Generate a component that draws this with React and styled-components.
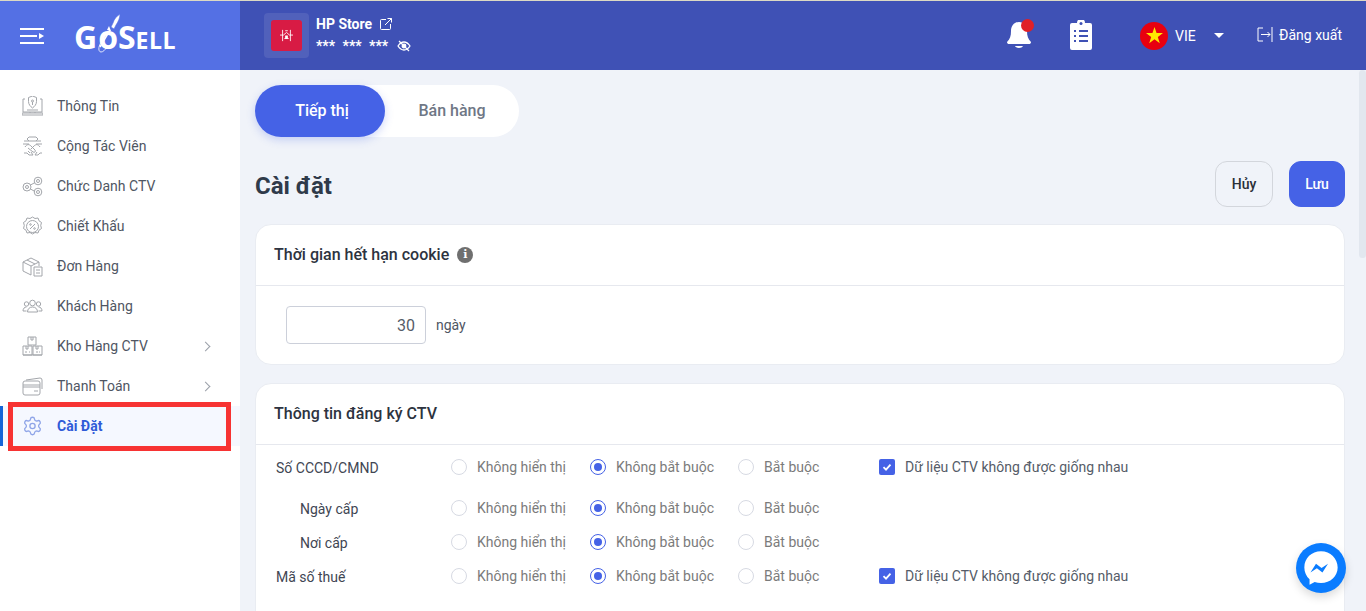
import React from "react"
import styled, { createGlobalStyle } from "styled-components"
import { Settings } from "lucide-react"

const GlobalStyle = createGlobalStyle`
  html, body { margin: 0; padding: 0; height: 100%; overflow: hidden; }
  body { font-family: Roboto, "Liberation Sans", sans-serif; color: #3b4453; }
  * { box-sizing: border-box; }
`

const Page = styled.div`
  width: 1366px;
  height: 611px;
  overflow: hidden;
  background: #f0f3f9;
  border-top: 1px solid #dcd9c4;
`
const Header = styled.header`
  height: 69px;
  display: flex;
  background: #3f51b5;
  color: #fff;
`
const Brand = styled.div`
  width: 240px;
  background: #5470e4;
  display: flex;
  align-items: center;
  padding-left: 20px;
  gap: 29px;
`
const LogoWrap = styled.div`
  position: relative;
  display: flex;
  align-items: baseline;
  color: #fff;
  font-family: "Open Sans", sans-serif;
  font-weight: 700;
  line-height: 1;
  margin-top: 2px;
`
const LogoBig = styled.span`
  font-size: 32px;
  letter-spacing: ${p => p.$gap || 0}px;
`
const LogoSmall = styled.span`
  font-size: 23px;
  letter-spacing: 0.5px;
`
const Rocket = styled.svg`
  position: absolute;
  left: 20px;
  top: -8px;
`
const HeaderMain = styled.div`
  flex: 1;
  display: flex;
  align-items: center;
  padding-left: 24px;
  padding-right: 24px;
`
const StoreThumb = styled.div`
  width: 45px;
  height: 45px;
  border-radius: 4px;
  background: #5161bb;
  display: flex;
  align-items: center;
  justify-content: center;
  margin-right: 7px;
`
const StoreLogo = styled.div`
  width: 31px;
  height: 31px;
  border-radius: 3px;
  background: #d81b44;
  display: flex;
  align-items: center;
  justify-content: center;
`
const StoreInfo = styled.div`
  display: flex;
  flex-direction: column;
  gap: 6px;
  margin-top: -3px;
`
const StoreName = styled.div`
  display: flex;
  align-items: center;
  gap: 8px;
  font-size: 14px;
  font-weight: 700;
  line-height: 18px;
`
const StoreMask = styled.div`
  display: flex;
  align-items: center;
  font-size: 14px;
  font-weight: 700;
  line-height: 14px;
  height: 14px;
  word-spacing: 4px;
  gap: 9px;
`
const HeaderRight = styled.div`
  margin-left: auto;
  display: flex;
  align-items: center;
`
const Bell = styled.div`
  position: relative;
  width: 26px;
  height: 30px;
  margin-top: -2px;
  margin-right: 38px;
`
const BellDot = styled.span`
  position: absolute;
  top: -1px;
  right: -2px;
  width: 13px;
  height: 13px;
  border-radius: 50%;
  background: #e02027;
`
const Clipboard = styled.svg`
  margin-top: -2px;
`
const Flag = styled.div`
  width: 28px;
  height: 28px;
  border-radius: 50%;
  background: #e8000f;
  display: flex;
  align-items: center;
  justify-content: center;
  margin-left: 48px;
  margin-right: 7px;
`
const Lang = styled.span`
  font-size: 14px;
  width: 39px;
`
const Caret = styled.span`
  width: 0;
  height: 0;
  border-left: 5px solid transparent;
  border-right: 5px solid transparent;
  border-top: 5px solid #fff;
  margin-right: 33px;
`
const Logout = styled.div`
  display: flex;
  align-items: center;
  gap: 6px;
  font-size: 14px;
  margin-top: -2px;
`

const Body = styled.div`
  display: flex;
  height: 541px;
`
const Sidebar = styled.nav`
  width: 240px;
  flex: none;
  background: #fff;
  padding-top: 16px;
`
const NavRow = styled.div`
  position: relative;
  height: 40px;
  display: flex;
  align-items: center;
  padding-left: 22px;
  padding-right: 31px;
  font-size: 14px;
  color: ${p => (p.$active ? "#2f5bd8" : "#4f5663")};
  font-weight: ${p => (p.$active ? 700 : 400)};
  background: ${p => (p.$active ? "#f5f8ff" : "transparent")};
`
const NavIcon = styled.span`
  width: 21px;
  height: 21px;
  margin-right: 14px;
  display: flex;
  align-items: center;
  justify-content: center;
`
const NavArrow = styled.span`
  margin-left: auto;
  width: 7px;
  height: 7px;
  border-top: 1.5px solid #9a9fa8;
  border-right: 1.5px solid #9a9fa8;
  transform: rotate(45deg);
`
const ActiveBar = styled.span`
  position: absolute;
  left: 0;
  top: 0;
  width: 3px;
  height: 40px;
  background: #1565d8;
`
const Highlight = styled.span`
  position: absolute;
  left: 8px;
  top: -4px;
  width: 223px;
  height: 49px;
  border: 5px solid #f73333;
  pointer-events: none;
`

const Main = styled.main`
  flex: 1;
  display: flex;
  min-width: 0;
`
const Content = styled.div`
  flex: 1;
  padding: 15px 14px 0 15px;
  min-width: 0;
`
const Scrollbar = styled.div`
  width: 7px;
  flex: none;
`
const ScrollThumb = styled.div`
  height: 188px;
  border-radius: 4px;
  background: #e2e7ef;
`
const Tabs = styled.div`
  display: inline-flex;
  height: 52px;
  background: #fff;
  border-radius: 26px;
`
const Tab = styled.div`
  width: ${p => (p.$active ? 130 : 134)}px;
  display: flex;
  align-items: center;
  justify-content: center;
  padding-left: ${p => (p.$active ? 4 : 0)}px;
  padding-bottom: 2px;
  border-radius: 26px;
  font-size: 16px;
  font-weight: 500;
  color: ${p => (p.$active ? "#fff" : "#6f7785")};
  background: ${p => (p.$active ? "#4562e6" : "transparent")};
  box-shadow: ${p => (p.$active ? "0 3px 8px rgba(69,98,230,.25)" : "none")};
`
const TitleRow = styled.div`
  display: flex;
  align-items: center;
  justify-content: space-between;
  margin-top: 24px;
  height: 46px;
  margin-bottom: 17px;
`
const Title = styled.h1`
  margin: 4px 0 0;
  font-size: 24px;
  font-weight: 700;
  color: #2f3a4a;
`
const Actions = styled.div`
  display: flex;
  gap: 16px;
`
const Button = styled.button`
  height: 46px;
  width: ${p => (p.$primary ? 56 : 58)}px;
  border-radius: 12px;
  font-family: Roboto, sans-serif;
  font-size: 14px;
  font-weight: 500;
  color: ${p => (p.$primary ? "#fff" : "#2a2f38")};
  background: ${p => (p.$primary ? "#4562e6" : "#f0f3f9")};
  border: 1px solid ${p => (p.$primary ? "#4562e6" : "#d3d6dc")};
  padding: 0;
`
const Card = styled.section`
  background: #fff;
  border: 1px solid #e9ecf2;
  border-radius: 16px;
  margin-bottom: 18px;
`
const CardHead = styled.div`
  height: 61px;
  display: flex;
  align-items: center;
  gap: 8px;
  padding: 0 0 1px 18px;
  border-bottom: 1px solid #e6e8ee;
  font-size: 16px;
  font-weight: 500;
  color: #2d3340;
`
const InfoDot = styled.span`
  width: 16px;
  height: 16px;
  border-radius: 50%;
  background: #6f6f6f;
  color: #fff;
  font-family: "DejaVu Serif", serif;
  font-size: 11px;
  font-weight: 700;
  display: flex;
  align-items: center;
  justify-content: center;
`
const CookieBody = styled.div`
  height: 78px;
  display: flex;
  align-items: center;
  padding-left: 30px;
  gap: 10px;
  font-size: 14px;
  color: #4f5663;
`
const NumberBox = styled.div`
  width: 140px;
  height: 38px;
  border: 1px solid #ccd0da;
  border-radius: 4px;
  display: flex;
  align-items: center;
  justify-content: flex-end;
  padding-right: 10px;
  font-size: 16px;
  color: #555c68;
`
const FieldList = styled.div`
  padding: 5px 0 60px;
`
const FieldRow = styled.div`
  display: flex;
  align-items: center;
  height: ${p => p.$h || 34}px;
  margin-bottom: ${p => p.$mb || 0}px;
  font-size: 14px;
`
const FieldLabel = styled.div`
  width: 195px;
  padding-left: ${p => (p.$sub ? 44 : 20)}px;
  color: #3f4653;
  padding-top: 2px;
`
const RadioItem = styled.div`
  display: flex;
  align-items: center;
  gap: 10px;
  width: ${p => p.$w}px;
  color: #7b7b7b;
`
const Radio = styled.span`
  width: 16px;
  height: 16px;
  border-radius: 50%;
  flex: none;
  background: #fff;
  border: ${p => (p.$on ? "1.5px solid #4562e6" : "1px solid #d7dae3")};
  display: flex;
  align-items: center;
  justify-content: center;
  &::after {
    content: "";
    display: ${p => (p.$on ? "block" : "none")};
    width: 8px;
    height: 8px;
    border-radius: 50%;
    background: #4562e6;
  }
`
const UniqueCheck = styled.div`
  display: flex;
  align-items: center;
  gap: 10px;
  color: #555c68;
`
const CheckBox = styled.span`
  width: 16px;
  height: 16px;
  border-radius: 2px;
  background: #4562e6;
  display: flex;
  align-items: center;
  justify-content: center;
`
const Messenger = styled.div`
  position: absolute;
  left: 1296px;
  top: 543px;
  width: 50px;
  height: 50px;
  border-radius: 50%;
  background: #0a7cff;
  box-shadow: 0 4px 10px rgba(0,0,0,.15);
  display: flex;
  align-items: center;
  justify-content: center;
`

const Ic = ({ children }) => (
  <svg width="21" height="21" viewBox="0 0 21 21" fill="none" stroke="#a3a6ab" strokeWidth="1">
    {children}
  </svg>
)

const icons = {
  info: (
    <Ic>
      <path d="M3 3H1v13h19V3h-2" />
      <path d="M0 17h21v2H0zM8 16v1M13 16v1M5 14h11" />
      <path d="M10.500 0l4 1.500v4c0 3-2 5-4 6.500-2-1.500-4-3.500-4-6.500v-4z" />
      <circle cx="10.500" cy="5" r="1" />
      <path d="M10.500 6v3" />
    </Ic>
  ),
  people: (
    <Ic>
      <path d="M7 1h7l2 2-2 2H7L5 3zM2 5h5M14 5h5M1 8h6M14 8h6" />
      <path d="M3 11c2-3 4-3 6-1l4 4c1 1 0 3-2 2l-5-4M18 11c-2-3-4-3-6-1l-3 3" />
      <path d="M6 15l2 2M9 16l2 3h-4l-2-2H2M15 16l-2 3h3l2-2h2" />
    </Ic>
  ),
  share: (
    <Ic>
      <circle cx="5" cy="11" r="4" />
      <circle cx="5" cy="11" r="1.500" />
      <circle cx="16" cy="5" r="3.800" />
      <circle cx="16" cy="5" r="1.500" />
      <circle cx="16" cy="16" r="3.800" />
      <circle cx="16" cy="16" r="1.500" />
      <path d="M8.500 9l4.500-2.500M8.500 13l4.500 2.500" />
    </Ic>
  ),
  percent: (
    <Ic>
      <path d="M10.500 1l2.500 1.500 3-.500 1 2.800 2.500 1.700-.8 3 .8 3-2.500 1.700-1 2.800-3-.500-2.500 1.500-2.500-1.500-3 .500-1-2.800-2.500-1.700.8-3-.8-3L4 4.800l1-2.800 3 .500z" />
      <circle cx="10.500" cy="10.500" r="6" />
      <path d="M8 13l5-5" />
      <circle cx="8.500" cy="8.500" r=".8" />
      <circle cx="12.500" cy="12.500" r=".8" />
    </Ic>
  ),
  box: (
    <Ic>
      <path d="M1 6l8-4 8 4v4M1 6v9l8 4M1 6l8 4v9M9 10l8-4M5 4l8 4" />
      <path d="M12 11h8v9h-8zM14 14h4M14 17h4" />
    </Ic>
  ),
  customers: (
    <Ic>
      <circle cx="10.500" cy="7" r="2.800" />
      <circle cx="4.500" cy="8" r="2.200" />
      <circle cx="16.500" cy="8" r="2.200" />
      <path d="M5.500 16c0-3 2-5 5-5s5 2 5 5zM4.500 15H1c0-2.500 1.500-4 3.500-4M16.500 15H20c0-2.500-1.500-4-3.500-4" />
    </Ic>
  ),
  stock: (
    <Ic>
      <path d="M6 1h8v8H6zM1 10h9v9H1zM11 10h9v9h-9z" />
      <path d="M9 1v3h2V1M4 10v3h2v-3M14 10v3h2v-3M3 16h2M14 16h2M7 16h1M17 16h1M1 19h19" />
    </Ic>
  ),
  card: (
    <Ic>
      <path d="M4 4l14-2a2 2 0 0 1 2 2v9" />
      <rect x="1" y="5" width="17" height="14" rx="2" />
      <path d="M1 9h17M1 11h17M12 15h4" />
    </Ic>
  ),
  gear: <Settings size={22} color="#8fa5e8" strokeWidth={1.5} />,
}

const navItems = [
  { label: "Thông Tin", icon: "info" },
  { label: "Cộng Tác Viên", icon: "people" },
  { label: "Chức Danh CTV", icon: "share" },
  { label: "Chiết Khấu", icon: "percent" },
  { label: "Đơn Hàng", icon: "box" },
  { label: "Khách Hàng", icon: "customers" },
  { label: "Kho Hàng CTV", icon: "stock", arrow: true },
  { label: "Thanh Toán", icon: "card", arrow: true },
  { label: "Cài Đặt", icon: "gear", active: true },
]

const fields = [
  { label: "Số CCCD/CMND", unique: true, h: 34, mb: 7 },
  { label: "Ngày cấp", sub: true },
  { label: "Nơi cấp", sub: true },
  { label: "Mã số thuế", unique: true },
]

const Check = () => (
  <svg width="12" height="12" viewBox="0 0 12 12" fill="none" stroke="#fff" strokeWidth="1.800">
    <path d="M2.500 6.200l2.500 2.500 4.500-5" />
  </svg>
)

export default function App() {
  return (
    <Page>
      <GlobalStyle />
      <Header>
        <Brand>
          <svg width="25" height="16" viewBox="0 0 25 16" fill="none" stroke="#fff" strokeWidth="2">
            <path d="M0 1h24M0 8h17M0 15h24" />
            <path d="M19 5l5 3-5 3z" fill="#fff" stroke="none" />
          </svg>
          <LogoWrap>
            <LogoBig $gap={1}>G</LogoBig>
            <LogoBig>o</LogoBig>
            <LogoBig>S</LogoBig>
            <LogoSmall>ELL</LogoSmall>
            <Rocket width="32" height="44" viewBox="0 0 32 44" fill="none" stroke="#fff">
              <path d="M26 1c-3 2-6 5-7 9l-2 4 3 2 2-4c2-3 4-7 4-11z" fill="#fff" stroke="#5470e4" strokeWidth=".6" />
              <path d="M15 13l2 5-4-1z" fill="#fff" stroke="none" />
              <path d="M16 17L6 34" strokeWidth="1.500" />
              <path d="M8 28c-4 5-4 11-1 11 2 0 4-2 5-4" strokeWidth=".8" />
            </Rocket>
          </LogoWrap>
        </Brand>
        <HeaderMain>
          <StoreThumb>
            <StoreLogo>
              <svg width="13" height="13" viewBox="0 0 15 15" fill="none" stroke="#fff" strokeWidth="1">
                <path d="M3 1v13M12 1v13M0 7h4l3.500-3L11 7h4M6 2h3M5 11h5" />
                <rect x="6.500" y="8" width="2" height="3" fill="#fff" />
              </svg>
            </StoreLogo>
          </StoreThumb>
          <StoreInfo>
            <StoreName>
              HP Store
              <svg width="12" height="12" viewBox="0 0 12 12" fill="none" stroke="#fff" strokeWidth="1">
                <path d="M6 1.500H1.500a1 1 0 0 0-1 1v8a1 1 0 0 0 1 1h8a1 1 0 0 0 1-1V6M5 7l6.500-6.500M7.500.5h4v4" />
              </svg>
            </StoreName>
            <StoreMask>
              <span>*** *** ***</span>
              <svg width="14" height="12" viewBox="0 0 14 12" fill="none" stroke="#fff" strokeWidth="1.300">
                <path d="M1 6c2-3 4-4 6-4s4 1 6 4c-2 3-4 4-6 4S3 9 1 6z" />
                <circle cx="7" cy="6" r="1.800" fill="#fff" />
                <path d="M2 1l10 10" />
              </svg>
            </StoreMask>
          </StoreInfo>
          <HeaderRight>
            <Bell>
              <svg width="26" height="30" viewBox="0 0 26 30" fill="#fff">
                <path d="M13 2c-5 0-8 4-8 9 0 5-1 8-4 11 0 1.500 1 2 2 2h20c1 0 2-.5 2-2-3-3-4-6-4-11 0-5-3-9-8-9z" />
                <path d="M9 26h8c-1 2.500-7 2.500-8 0z" />
              </svg>
              <BellDot />
            </Bell>
            <Clipboard width="22" height="30" viewBox="0 0 22 30">
              <path
                fill="#fff"
                d="M2 3h5a4 4 0 0 1 8 0h5a2 2 0 0 1 2 2v23a2 2 0 0 1-2 2H2a2 2 0 0 1-2-2V5a2 2 0 0 1 2-2z"
              />
              <circle cx="11" cy="3.500" r="1.500" fill="#3f51b5" />
              <path
                stroke="#3f51b5"
                strokeWidth="2"
                d="M9 11h9M9 16h9M9 21h9M4 11h2M4 16h2M4 21h2"
              />
            </Clipboard>
            <Flag>
              <svg width="17" height="17" viewBox="0 0 20 20">
                <path fill="#ffea00" d="M10 0l2.400 7.200H20l-6.100 4.500 2.300 7.300L10 14.500 3.800 19l2.300-7.300L0 7.200h7.600z" />
              </svg>
            </Flag>
            <Lang>VIE</Lang>
            <Caret />
            <Logout>
              <svg width="16" height="15" viewBox="0 0 16 15" fill="none" stroke="#fff" strokeWidth="1">
                <path d="M6 1H1v13h5M4 7.500h9M10.500 5l2.500 2.500-2.500 2.500M15 0v15" />
              </svg>
              Đăng xuất
            </Logout>
          </HeaderRight>
        </HeaderMain>
      </Header>
      <Body>
        <Sidebar>
          {navItems.map(item => (
            <NavRow key={item.label} $active={item.active}>
              {item.active && <ActiveBar />}
              {item.active && <Highlight />}
              <NavIcon>{icons[item.icon]}</NavIcon>
              {item.label}
              {item.arrow && <NavArrow />}
            </NavRow>
          ))}
        </Sidebar>
        <Main>
          <Content>
            <Tabs>
              <Tab $active>Tiếp thị</Tab>
              <Tab>Bán hàng</Tab>
            </Tabs>
            <TitleRow>
              <Title>Cài đặt</Title>
              <Actions>
                <Button>Hủy</Button>
                <Button $primary>Lưu</Button>
              </Actions>
            </TitleRow>
            <Card>
              <CardHead>
                Thời gian hết hạn cookie
                <InfoDot>i</InfoDot>
              </CardHead>
              <CookieBody>
                <NumberBox>30</NumberBox>
                ngày
              </CookieBody>
            </Card>
            <Card>
              <CardHead>Thông tin đăng ký CTV</CardHead>
              <FieldList>
                {fields.map(f => (
                  <FieldRow key={f.label} $h={f.h} $mb={f.mb}>
                    <FieldLabel $sub={f.sub}>{f.label}</FieldLabel>
                    <RadioItem $w={139}>
                      <Radio />
                      Không hiển thị
                    </RadioItem>
                    <RadioItem $w={148}>
                      <Radio $on />
                      Không bắt buộc
                    </RadioItem>
                    <RadioItem $w={141}>
                      <Radio />
                      Bắt buộc
                    </RadioItem>
                    {f.unique && (
                      <UniqueCheck>
                        <CheckBox>
                          <Check />
                        </CheckBox>
                        Dữ liệu CTV không được giống nhau
                      </UniqueCheck>
                    )}
                  </FieldRow>
                ))}
              </FieldList>
            </Card>
          </Content>
          <Scrollbar>
            <ScrollThumb />
          </Scrollbar>
        </Main>
      </Body>
      <Messenger>
        <svg width="40" height="40" viewBox="0 0 36 36">
          <path
            fill="#fff"
            d="M18 3C9.500 3 3 9.200 3 17.500c0 4.300 1.800 8 4.700 10.600v5l4.600-2.500c1.800.6 3.700.9 5.700.9 8.500 0 15-6.200 15-14S26.500 3 18 3z"
          />
          <path fill="#0a7cff" d="M8.500 22l5-7.800 5 3.700 5.800-3.700-5 7.800-5-3.700z" />
        </svg>
      </Messenger>
    </Page>
  )
}
